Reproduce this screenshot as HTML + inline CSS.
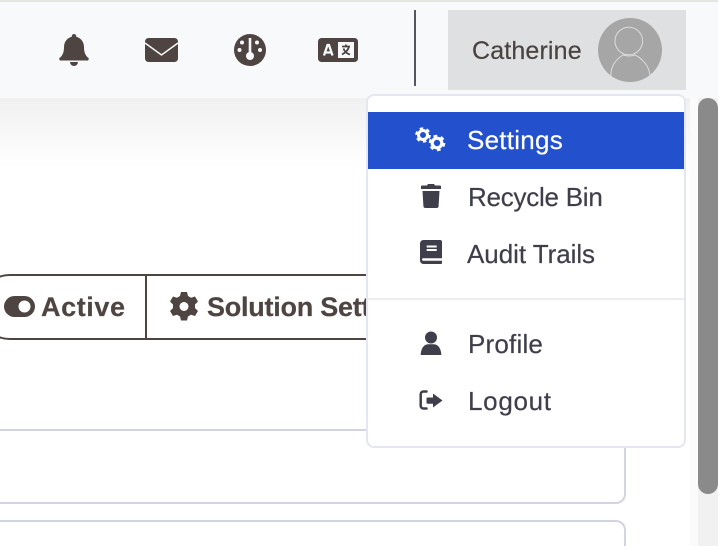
<!DOCTYPE html>
<html><head><meta charset="utf-8">
<style>
html,body{margin:0;padding:0;width:718px;height:546px;overflow:hidden}
body{position:relative;background:#fff;font-family:"Liberation Sans",sans-serif}
#r{position:absolute;left:0;top:0;width:718px;height:546px;overflow:hidden;background:#fff}
.a{position:absolute}
.t{position:absolute;white-space:nowrap;font-size:26px;line-height:32px;color:#3f3f4b;-webkit-text-stroke:.2px currentColor}
svg{position:absolute;overflow:visible}
</style></head><body><div id="r">
<div class="a" style="left:0;top:0;width:718px;height:2px;background:#e3e5e1"></div>
<div class="a" style="left:0;top:2px;width:718px;height:96px;background:#f8f9fb"></div>
<div class="a" style="left:0;top:98px;width:718px;height:70px;background:linear-gradient(#f0f0f0,#fff)"></div>

<!-- bell -->
<svg style="left:60px;top:34px" width="28" height="32" viewBox="0 0 28 32"><path fill="#4e4543" d="M14 0a2.200 2.200 0 0 1 2.200 2.700C20.500 3.800 24 7.500 24 13c0 5.500 1.500 8 3.500 10.200a1.700 1.700 0 0 1-1 3.300H1.500a1.700 1.700 0 0 1-1-3.300C2.500 21 4 18.500 4 13c0-5.500 3.500-9.200 7.800-10.300A2.200 2.200 0 0 1 14 0zM10 28h8a4 4 0 0 1-8 0z"/></svg>
<!-- mail -->
<svg style="left:145px;top:38px" width="33" height="24" viewBox="0 0 33 24"><rect width="33" height="24" rx="3.500" fill="#4e4543"/><path d="M0 5l16.500 12L33 5" fill="none" stroke="#f8f9fb" stroke-width="1.500"/></svg>
<!-- gauge -->
<svg style="left:234px;top:34px" width="32" height="32" viewBox="0 0 32 32"><circle cx="16" cy="16" r="16" fill="#4e4543"/><path d="M14.700 4h2.600v16h-2.600z" fill="#f8f9fb"/><circle cx="16" cy="22" r="4" fill="#f8f9fb"/><circle cx="8" cy="8.500" r="2" fill="#f8f9fb"/><circle cx="23" cy="8.500" r="2" fill="#f8f9fb"/><circle cx="5.500" cy="16" r="2" fill="#f8f9fb"/><circle cx="26" cy="16" r="2" fill="#f8f9fb"/></svg>
<!-- language -->
<svg style="left:318px;top:38px" width="40" height="24" viewBox="0 0 40 24"><rect width="40" height="24" rx="3.500" fill="#4e4543"/><rect x="20" y="4" width="16" height="16" fill="#f8f9fb"/><path d="M6 17.500L9.500 7h1.500L14.500 17.500M7.500 14.500h5.500" fill="none" stroke="#f8f9fb" stroke-width="2.300"/><path d="M24 8.500h8M31 8.500c-.8 3.500-3.200 6-7 8M25.500 10.500c1 3 3.300 5 6.500 6M28 6.500v2" fill="none" stroke="#4e4543" stroke-width="1.800"/></svg>

<div class="a" style="left:414px;top:10px;width:2px;height:76px;background:#55555f"></div>
<div class="a" style="left:448px;top:10px;width:238px;height:80px;background:#dfe0e2"></div>
<div class="t" style="left:472px;top:35px;font-size:25px;color:#4a4341;letter-spacing:.15px">Catherine</div>
<svg style="left:598px;top:18px" width="64" height="64" viewBox="0 0 64 64"><circle cx="32" cy="32" r="32" fill="#a6a6a6"/><circle cx="30.800" cy="23" r="13.800" fill="none" stroke="#dcdcdc" stroke-width="1"/><path d="M13 59c-1-10 5-18 12-22q6 2 12 0c8 4 15 12 15 22" fill="none" stroke="#dcdcdc" stroke-width="1"/></svg>

<!-- toolbar pill -->
<div class="a" style="left:-22px;top:274px;width:430px;height:66px;box-sizing:border-box;border:2px solid #4e4543;border-radius:32px"></div>
<div class="a" style="left:145px;top:275px;width:2px;height:64px;background:#4e4543"></div>
<svg style="left:4px;top:296px" width="32" height="22" viewBox="0 0 32 22"><rect y="0" width="31" height="21" rx="10.500" fill="#4e4543"/><circle cx="20.500" cy="10.500" r="6" fill="#fff"/></svg>
<div class="t" style="left:41px;top:291px;font-size:27px;font-weight:bold;color:#4e4543;letter-spacing:.6px">Active</div>
<svg style="left:170px;top:292px" width="28" height="29" viewBox="0 0 28 29"><path fill="#4e4543" fill-rule="evenodd" d="M11 0h6l1 4 3 1.700 4-1.200 3 5-3 3v3.500l3 3-3 5-4-1.200-3 1.700-1 4h-6l-1-4-3-1.700-4 1.200-3-5 3-3v-3.500l-3-3 3-5 4 1.200 3-1.700zM14 10a4.500 4.500 0 1 0 0 9 4.500 4.500 0 0 0 0-9z"/></svg>
<div class="a" style="left:207px;top:291px;width:159px;height:32px;overflow:hidden"><div class="t" style="left:0;top:0;font-size:27px;font-weight:bold;color:#4e4543;letter-spacing:-.25px">Solution Settings</div></div>

<!-- cards -->
<div class="a" style="left:0;top:429px;width:626px;height:75px;box-sizing:border-box;border:2px solid #d2d4e2;border-left:0;border-radius:0 10px 10px 0"></div>
<div class="a" style="left:0;top:520px;width:626px;height:26px;box-sizing:border-box;border:2px solid #d2d4e2;border-left:0;border-bottom:0;border-radius:0 10px 0 0"></div>

<!-- scrollbar -->
<div class="a" style="left:690px;top:98px;width:8px;height:448px;background:#fbfbfb"></div>
<div class="a" style="left:698px;top:98px;width:20px;height:448px;background:#f1f1f1"></div>
<div class="a" style="left:698px;top:98px;width:20px;height:396px;background:#8a8a8a;border-radius:10px"></div>

<!-- dropdown -->
<div class="a" style="left:366px;top:94px;width:320px;height:354px;box-sizing:border-box;background:#fff;border:2px solid #e4e6f1;border-radius:8px"></div>
<div class="a" style="left:368px;top:112px;width:316px;height:57px;background:#2350cd"></div>
<div class="a" style="left:368px;top:298px;width:316px;height:2px;background:#ebebf1"></div>

<svg style="left:415px;top:127px" width="32" height="26" viewBox="0 0 32 26"><g fill="none" stroke="#fff"><circle cx="8" cy="8" r="4.500" stroke-width="3"/><circle cx="8" cy="8" r="6.500" stroke-width="2.600" stroke-dasharray="3.400 3.400"/><circle cx="22" cy="16" r="4.800" stroke-width="3.200"/><circle cx="22" cy="16" r="7" stroke-width="2.600" stroke-dasharray="3.660 3.670"/></g></svg>
<div class="t" style="left:467px;top:124px;color:#fff;letter-spacing:.25px">Settings</div>

<svg style="left:421px;top:184px" width="20" height="24" viewBox="0 0 20 24"><path fill="#3f3f4b" d="M7 0h6l1 1.500h5a1 1 0 0 1 1 1V5H0V2.500a1 1 0 0 1 1-1h5zM1.500 7h17l-.9 15a2 2 0 0 1-2 2H4.400a2 2 0 0 1-2-2z"/></svg>
<div class="t" style="left:468px;top:181px;letter-spacing:-.25px">Recycle Bin</div>

<svg style="left:420px;top:240px" width="22" height="24" viewBox="0 0 22 24"><path fill="#3f3f4b" d="M3.500 0H20a2 2 0 0 1 2 2v21a1 1 0 0 1-1 1H3.500A3.500 3.500 0 0 1 0 20.500v-17A3.500 3.500 0 0 1 3.500 0z"/><path fill="#fff" d="M3.200 18.300H22v2.400H3.200a1.200 1.200 0 0 1 0-2.400zM6.700 5.500h10v2H6.700zM6.700 9h10v2H6.700z"/></svg>
<div class="t" style="left:467px;top:238px;letter-spacing:-.05px">Audit Trails</div>

<svg style="left:420px;top:331px" width="22" height="24" viewBox="0 0 22 24"><circle cx="11" cy="6.500" r="6" fill="#3f3f4b"/><path fill="#3f3f4b" d="M.7 24c0-6 3-10.800 7.300-10.800h6c4.300 0 7.300 4.800 7.300 10.800z"/></svg>
<div class="t" style="left:468px;top:328px;letter-spacing:.2px">Profile</div>

<svg style="left:419px;top:390px" width="25" height="21" viewBox="0 0 25 21"><path d="M7.500 1.500H4.500a2.800 2.800 0 0 0-2.800 2.800v11.400a2.800 2.800 0 0 0 2.800 2.800h3" fill="none" stroke="#3f3f4b" stroke-width="2.500" stroke-linecap="round"/><path fill="#3f3f4b" d="M8.500 7.500H14V3.500L23.500 10.500 14 17.500V13.800H8.500a1 1 0 0 1-1-1V8.500a1 1 0 0 1 1-1z"/></svg>
<div class="t" style="left:468px;top:385px;letter-spacing:.7px">Logout</div>
</div></body></html>
